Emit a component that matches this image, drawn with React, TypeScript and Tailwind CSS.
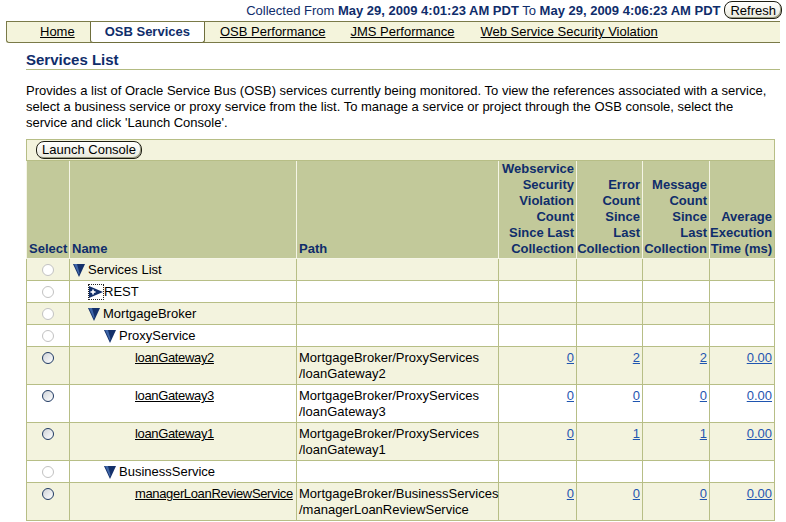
import type { ReactNode } from 'react';

const navy = 'text-[#0f2d6b]';

const tabs = [
  { label: 'OSB Performance', ml: 'ml-[15px]' },
  { label: 'JMS Performance', ml: 'ml-[25px]' },
  { label: 'Web Service Security Violation', ml: 'ml-[26px]' },
];

type Row = {
  kind: 'folder' | 'collapsed' | 'leaf';
  label: string;
  indent: number;
  path?: [string, string];
  counts?: [string, string, string, string];
};

const rows: Row[] = [
  { kind: 'folder', label: 'Services List', indent: 0 },
  { kind: 'collapsed', label: 'REST', indent: 1 },
  { kind: 'folder', label: 'MortgageBroker', indent: 1 },
  { kind: 'folder', label: 'ProxyService', indent: 2 },
  {
    kind: 'leaf',
    label: 'loanGateway2',
    indent: 4,
    path: ['MortgageBroker/ProxyServices', '/loanGateway2'],
    counts: ['0', '2', '2', '0.00'],
  },
  {
    kind: 'leaf',
    label: 'loanGateway3',
    indent: 4,
    path: ['MortgageBroker/ProxyServices', '/loanGateway3'],
    counts: ['0', '0', '0', '0.00'],
  },
  {
    kind: 'leaf',
    label: 'loanGateway1',
    indent: 4,
    path: ['MortgageBroker/ProxyServices', '/loanGateway1'],
    counts: ['0', '1', '1', '0.00'],
  },
  { kind: 'folder', label: 'BusinessService', indent: 2 },
  {
    kind: 'leaf',
    label: 'managerLoanReviewService',
    indent: 4,
    path: ['MortgageBroker/BusinessServices', '/managerLoanReviewService'],
    counts: ['0', '0', '0', '0.00'],
  },
];

const indentClass = ['pl-[3px]', 'pl-[18px]', 'pl-[34px]', 'pl-[50px]', 'pl-[65px]'];

function Button({ children }: { children: ReactNode }) {
  return (
    <button className="h-[18px] rounded-[8px] border border-[#1d1d12] bg-gradient-to-b from-white to-[#e9e9dc] px-[5px] text-[13px] leading-[15px] text-black shadow-[inset_-1px_-1px_0_#9a9a80]">
      {children}
    </button>
  );
}

function Radio({ enabled }: { enabled: boolean }) {
  return enabled ? (
    <span className="mx-auto block h-[12px] w-[12px] rounded-full border-[1.5px] border-[#203a63] bg-gradient-to-br from-[#cfd3d8] to-white" />
  ) : (
    <span className="mx-auto block h-[12px] w-[12px] rounded-full border border-[#c2c2c2] bg-white" />
  );
}

function DownTriangle() {
  return (
    <svg width="12" height="14" viewBox="0 0 12 14" className="mr-[3px] shrink-0">
      <polygon points="0,1 12,1 6,14" fill="#14306a" />
      <polygon points="1,1 4,1 6.5,10 6,12" fill="#3f66a8" />
    </svg>
  );
}

function CollapsedIcon() {
  return (
    <span className="flex h-[16px] w-[16px] shrink-0 items-center justify-center border border-dotted border-[#222]">
      <svg width="14" height="12" viewBox="0 0 14 12">
        <polygon points="0,0 14,6 0,12" fill="#14306a" />
        <rect x="1.5" y="5.2" width="5" height="1.6" fill="#ffffff" />
        <rect x="3.2" y="3.5" width="1.6" height="5" fill="#ffffff" />
      </svg>
    </span>
  );
}

export default function App() {
  return (
    <div className="h-[522px] w-[786px] overflow-hidden bg-white font-['Liberation_Sans',Arial,sans-serif] text-[13px] text-black">
      <div className="flex h-[21px] items-center justify-end pr-[4px]">
        <span className={navy}>
          Collected From <b>May 29, 2009 4:01:23 AM PDT</b> To <b>May 29, 2009 4:06:23 AM PDT</b>
        </span>
        <span className="ml-[4px]">
          <Button>Refresh</Button>
        </span>
      </div>

      <div className="mx-[6px] flex h-[22px] items-stretch rounded-bl-[3px] border-t border-b border-l border-[#7a7a48] bg-[#f4f4dc]">
        <a className="ml-[33px] mr-[15px] self-center underline">Home</a>
        <span className={`-mb-[1px] flex items-center rounded-b-[3px] border-x border-b border-[#6e6e3c] bg-white px-[14px] font-bold ${navy}`}>
          OSB Services
        </span>
        {tabs.map((t) => (
          <a key={t.label} className={`${t.ml} self-center underline`}>
            {t.label}
          </a>
        ))}
      </div>

      <div className="ml-[26px] mr-[6px] mt-[8px]">
        <h1 className={`border-b border-[#b3bb82] pb-[1px] text-[15px] font-bold leading-[17px] ${navy}`}>
          Services List
        </h1>
        <p className="mt-[13px] leading-[16px]">
          Provides a list of Oracle Service Bus (OSB) services currently being monitored. To view the references associated with a service,
          <br />
          select a business service or proxy service from the list. To manage a service or project through the OSB console, select the
          <br />
          service and click 'Launch Console'.
        </p>
      </div>

      <table className="ml-[26px] mt-[8px] w-[748px] table-fixed border-collapse">
        <colgroup>
          <col className="w-[43px]" />
          <col className="w-[227px]" />
          <col className="w-[202px]" />
          <col className="w-[78px]" />
          <col className="w-[66px]" />
          <col className="w-[67px]" />
          <col className="w-[65px]" />
        </colgroup>
        <thead>
          <tr>
            <td colSpan={7} className="h-[21px] border border-[#b7be86] bg-[#f3f3dd] py-0 pl-[9px] align-middle">
              <Button>Launch Console</Button>
            </td>
          </tr>
          <tr className={`bg-[#c2c99a] font-bold leading-[16px] ${navy}`}>
            <th className="h-[98px] border border-[#f5f5e6] pb-[1px] pl-[2px] text-left align-bottom">Select</th>
            <th className="border border-[#f5f5e6] pb-[1px] pl-[2px] text-left align-bottom">Name</th>
            <th className="border border-[#f5f5e6] pb-[1px] pl-[2px] text-left align-bottom">Path</th>
            <th className="border border-[#f5f5e6] pb-[1px] pr-[2px] text-right align-bottom">
              Webservice Security Violation Count Since Last Collection
            </th>
            <th className="border border-[#f5f5e6] pb-[1px] pr-[2px] text-right align-bottom">
              Error Count Since Last Collection
            </th>
            <th className="border border-[#f5f5e6] pb-[1px] pr-[2px] text-right align-bottom">
              Message Count Since Last Collection
            </th>
            <th className="border border-[#f5f5e6] border-r-[#b7be86] pb-[1px] pr-[2px] text-right align-bottom">
              Average Execution Time (ms)
            </th>
          </tr>
        </thead>
        <tbody>
          {rows.map((r, i) => {
            const bg = i % 2 === 0 ? 'bg-[#f3f3de]' : 'bg-white';
            const cell = 'border border-[#b7be86] align-top leading-[16px]';
            return (
              <tr key={r.label} className={bg}>
                <td className={`${cell} pt-[5px] ${r.kind === 'leaf' ? 'h-[38px]' : 'h-[22px]'}`}>
                  <Radio enabled={r.kind === 'leaf'} />
                </td>
                <td className={`${cell} whitespace-nowrap pt-[3px] pb-[2px] ${indentClass[r.indent]}`}>
                  {r.kind === 'leaf' ? (
                    <a className="tracking-[-0.35px] underline">{r.label}</a>
                  ) : (
                    <span className="flex items-center">
                      {r.kind === 'folder' ? <DownTriangle /> : <CollapsedIcon />}
                      {r.label}
                    </span>
                  )}
                </td>
                <td className={`${cell} pt-[3px] pb-[2px] pl-[2px]`}>
                  {r.path && (
                    <>
                      {r.path[0]}
                      <br />
                      {r.path[1]}
                    </>
                  )}
                </td>
                {[0, 1, 2, 3].map((k) => (
                  <td key={k} className={`${cell} pt-[3px] pb-[2px] pr-[2px] text-right`}>
                    {r.counts && <a className="text-[#1f55b0] underline">{r.counts[k]}</a>}
                  </td>
                ))}
              </tr>
            );
          })}
        </tbody>
      </table>
    </div>
  );
}
